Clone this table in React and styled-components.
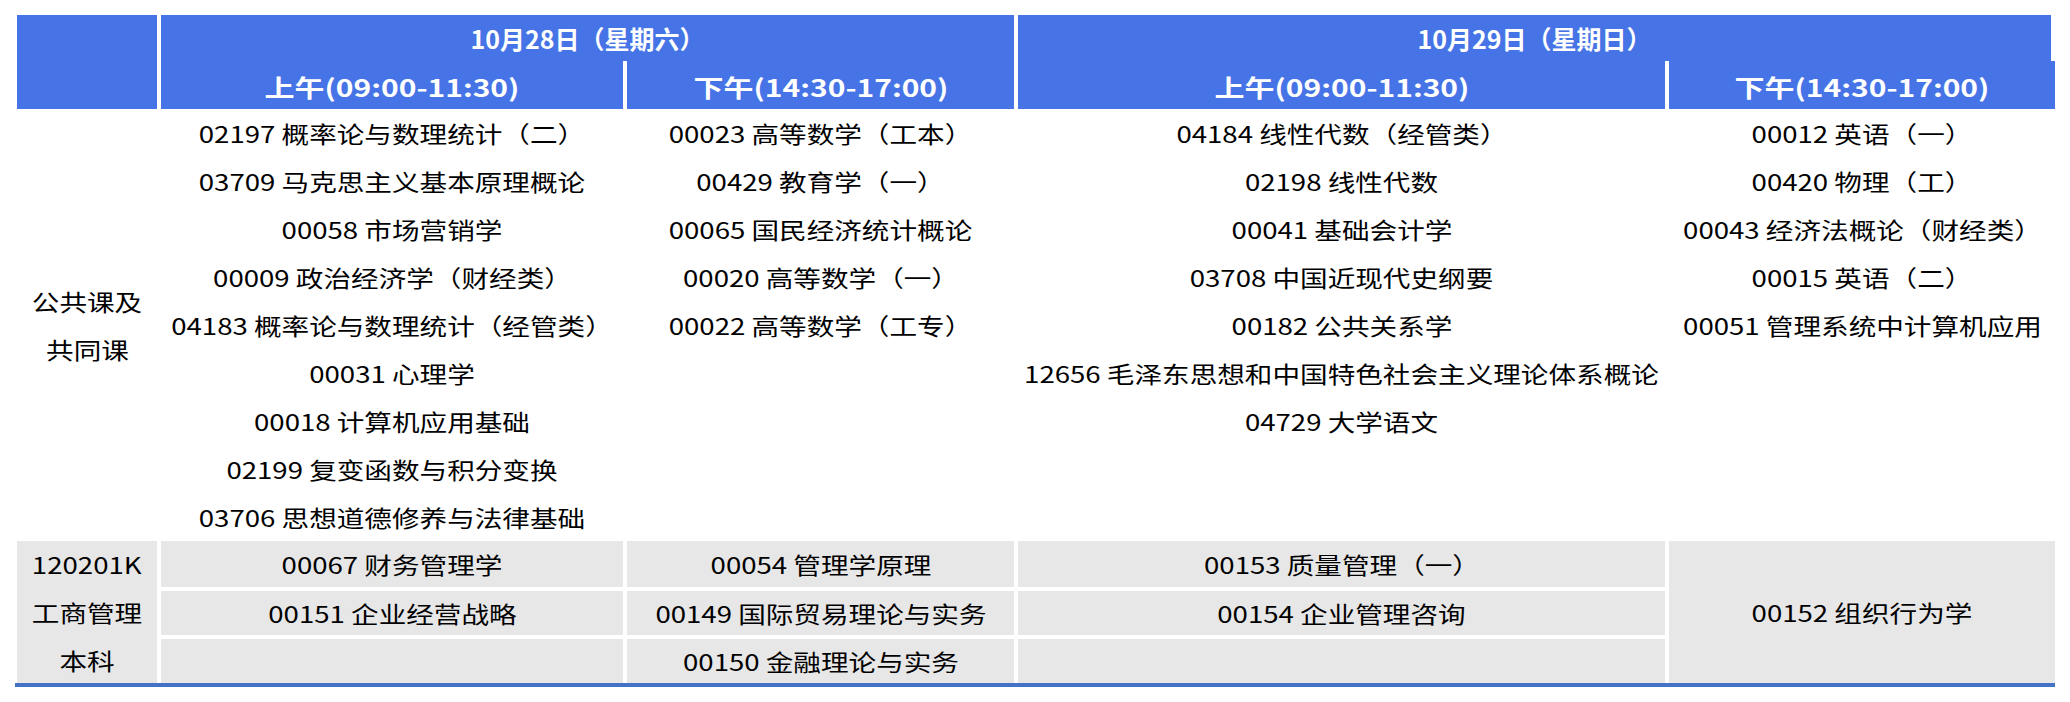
import React from "react";
import styled, { createGlobalStyle } from "styled-components";

const COLS = "140px 462px 387px 647px 386px";

const GlobalStyle = createGlobalStyle`
  html, body {
    margin: 0;
    padding: 0;
    background: #ffffff;
  }
  body {
    font-family: "Noto Sans CJK SC", "Noto Sans", sans-serif;
    color: #000000;
  }
`;

const Page = styled.div`
  padding: 15px 15px 0 17px;
`;

const Table = styled.div`
  width: 2038px;
  display: flex;
  flex-direction: column;
`;

const HeaderGrid = styled.div`
  display: grid;
  grid-template-columns: ${COLS};
  grid-template-rows: 46px 48px;
  column-gap: 4px;
`;

const HeadCell = styled.div`
  background: #4674e6;
  color: #ffffff;
  font-weight: 700;
  display: flex;
  align-items: center;
  justify-content: center;
  grid-column: ${(p) => p.$col || "auto"};
  grid-row: ${(p) => p.$row || "auto"};
  margin-right: ${(p) => (p.$notch ? "4px" : "0")};
  font-size: ${(p) => (p.$date ? "25px" : "24px")};
  padding-top: ${(p) => (p.$date ? "0" : "3px")};
`;

const Stretch = styled.span`
  display: inline-block;
  white-space: nowrap;
  transform: scaleX(${(p) => p.$scale || 1.2});
`;

const BodyGrid = styled.div`
  display: grid;
  grid-template-columns: ${COLS};
  column-gap: 4px;
`;

const Column = styled.div`
  display: flex;
  flex-direction: column;
  align-items: center;
  justify-content: ${(p) => (p.$middle ? "center" : "flex-start")};
`;

const Line = styled.div`
  height: 48px;
  line-height: 48px;
  font-size: 23px;
  text-align: center;
`;

const MajorGrid = styled.div`
  display: grid;
  grid-template-columns: ${COLS};
  grid-template-rows: 46px 44px 44px;
  column-gap: 4px;
  row-gap: 4px;
  border-bottom: 4px solid #4472c4;
  margin-left: -2px;
  padding-left: 2px;
`;

const GrayCell = styled.div`
  background: #e7e7e7;
  display: flex;
  flex-direction: column;
  align-items: center;
  justify-content: center;
  font-size: 23px;
  grid-column: ${(p) => p.$col || "auto"};
  grid-row: ${(p) => p.$row || "auto"};
`;

const StackLine = styled.div`
  height: 48px;
  line-height: 48px;
`;

const publicCourses = [
  [
    "02197 概率论与数理统计（二）",
    "03709 马克思主义基本原理概论",
    "00058 市场营销学",
    "00009 政治经济学（财经类）",
    "04183 概率论与数理统计（经管类）",
    "00031 心理学",
    "00018 计算机应用基础",
    "02199 复变函数与积分变换",
    "03706 思想道德修养与法律基础",
  ],
  [
    "00023 高等数学（工本）",
    "00429 教育学（一）",
    "00065 国民经济统计概论",
    "00020 高等数学（一）",
    "00022 高等数学（工专）",
  ],
  [
    "04184 线性代数（经管类）",
    "02198 线性代数",
    "00041 基础会计学",
    "03708 中国近现代史纲要",
    "00182 公共关系学",
    "12656 毛泽东思想和中国特色社会主义理论体系概论",
    "04729 大学语文",
  ],
  [
    "00012 英语（一）",
    "00420 物理（工）",
    "00043 经济法概论（财经类）",
    "00015 英语（二）",
    "00051 管理系统中计算机应用",
  ],
];

const majorRows = [
  ["00067 财务管理学", "00054 管理学原理", "00153 质量管理（一）"],
  ["00151 企业经营战略", "00149 国际贸易理论与实务", "00154 企业管理咨询"],
  ["", "00150 金融理论与实务", ""],
];

const App = () => {
  return (
    <Page>
      <GlobalStyle />
      <Table>
        <HeaderGrid>
          <HeadCell $col="1" $row="1 / span 2" />
          <HeadCell $col="2 / span 2" $row="1" $date>
            <Stretch $scale={1}>10月28日（星期六）</Stretch>
          </HeadCell>
          <HeadCell $col="4 / span 2" $row="1" $date $notch>
            <Stretch $scale={1}>10月29日（星期日）</Stretch>
          </HeadCell>
          <HeadCell $col="2" $row="2">
            <Stretch $scale={1.25}>上午(09:00-11:30)</Stretch>
          </HeadCell>
          <HeadCell $col="3" $row="2">
            <Stretch $scale={1.25}>下午(14:30-17:00)</Stretch>
          </HeadCell>
          <HeadCell $col="4" $row="2">
            <Stretch $scale={1.25}>上午(09:00-11:30)</Stretch>
          </HeadCell>
          <HeadCell $col="5" $row="2">
            <Stretch $scale={1.25}>下午(14:30-17:00)</Stretch>
          </HeadCell>
        </HeaderGrid>

        <BodyGrid>
          <Column $middle>
            <Line>
              <Stretch>公共课及</Stretch>
            </Line>
            <Line>
              <Stretch>共同课</Stretch>
            </Line>
          </Column>
          {publicCourses.map((list, i) => (
            <Column key={"pub-" + i}>
              {list.map((name) => (
                <Line key={name}>
                  <Stretch>{name}</Stretch>
                </Line>
              ))}
            </Column>
          ))}
        </BodyGrid>

        <MajorGrid>
          <GrayCell $col="1" $row="1 / span 3">
            <StackLine>
              <Stretch>120201K</Stretch>
            </StackLine>
            <StackLine>
              <Stretch>工商管理</Stretch>
            </StackLine>
            <StackLine>
              <Stretch>本科</Stretch>
            </StackLine>
          </GrayCell>
          {majorRows.map((row, r) =>
            row.map((name, c) => (
              <GrayCell key={`major-${r}-${c}`} $col={String(c + 2)} $row={String(r + 1)}>
                {name && <Stretch>{name}</Stretch>}
              </GrayCell>
            ))
          )}
          <GrayCell $col="5" $row="1 / span 3">
            <Stretch>00152 组织行为学</Stretch>
          </GrayCell>
        </MajorGrid>
      </Table>
    </Page>
  );
};

export default App;
